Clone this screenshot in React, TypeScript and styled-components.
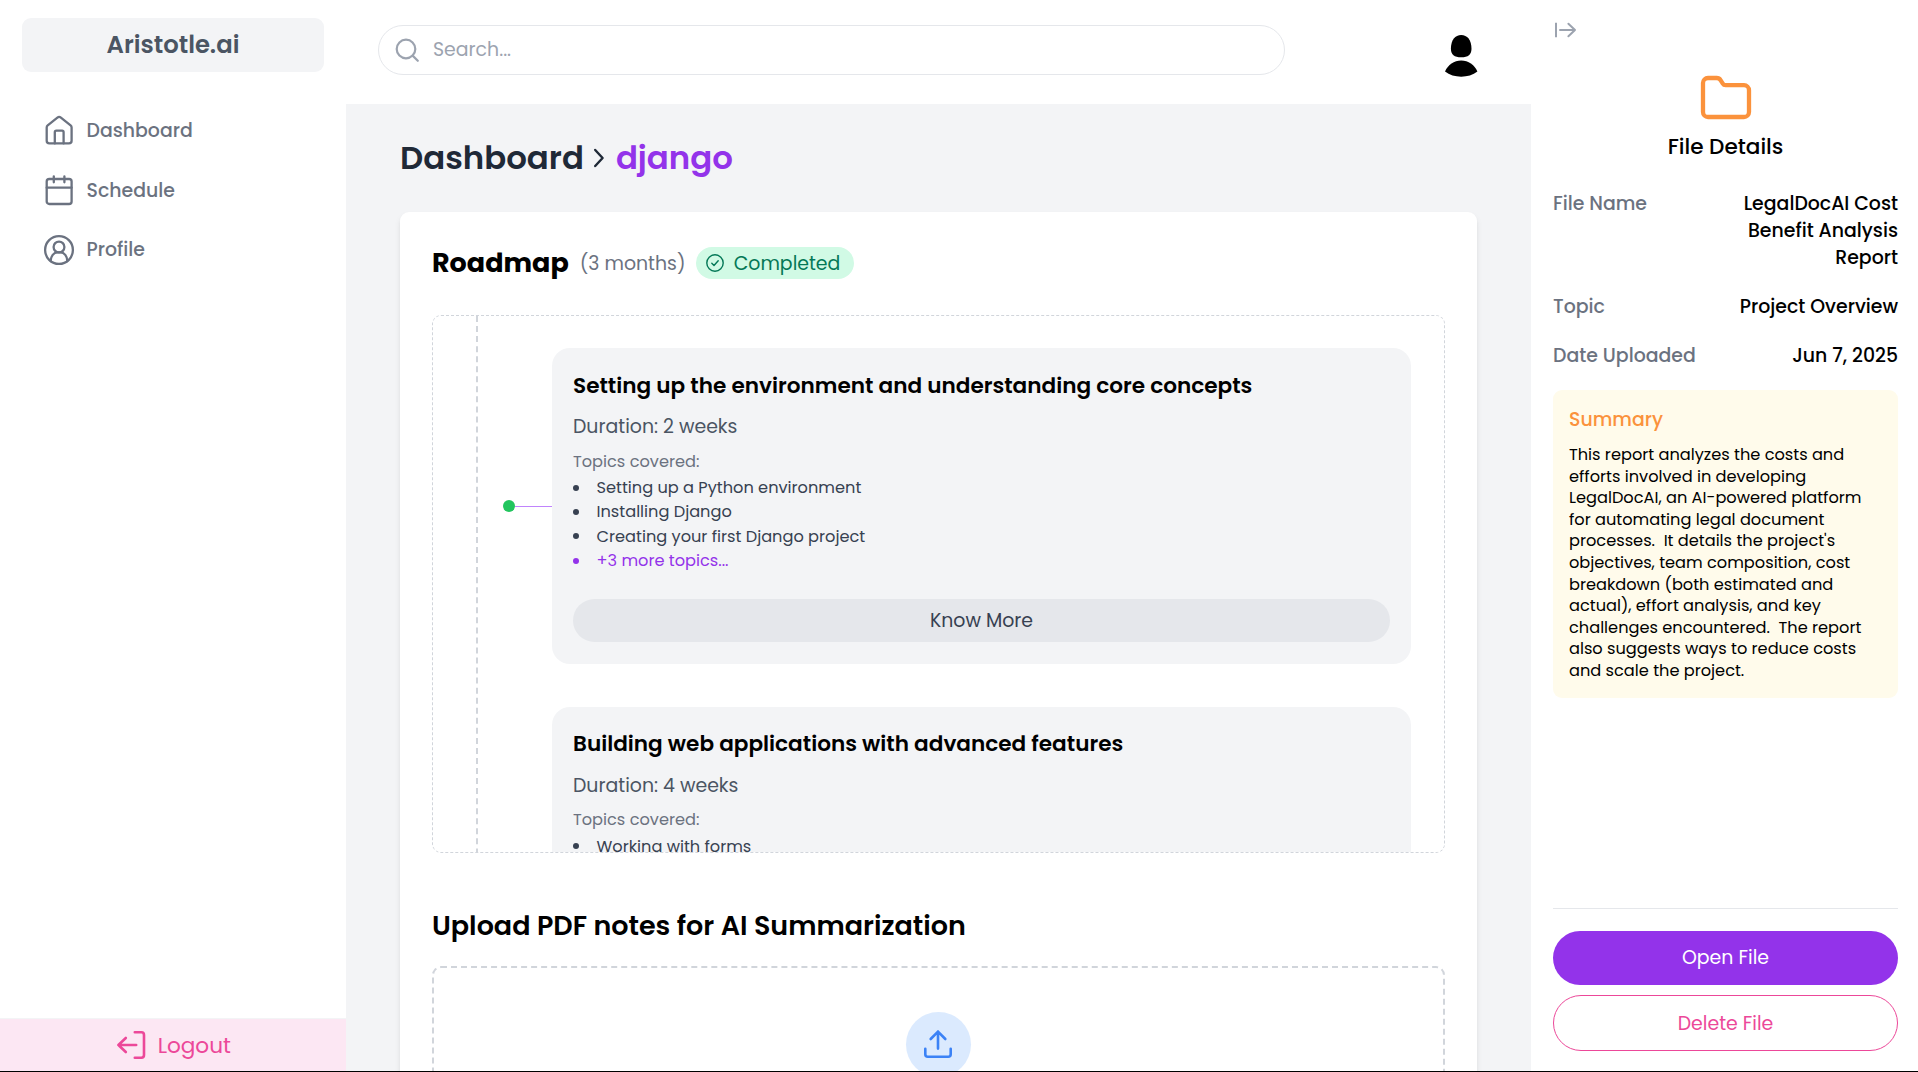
import React from 'react';
import styled, { createGlobalStyle } from 'styled-components';

const color = {
  gray100: '#f3f4f6',
  gray200: '#e5e7eb',
  gray300: '#d1d5db',
  gray400: '#9ca3af',
  gray500: '#6b7280',
  gray600: '#4b5563',
  gray700: '#374151',
  gray800: '#1f2937',
  purple: '#9333ea',
  pink: '#ec4899',
  orange: '#fb923c',
};

const GlobalStyle = createGlobalStyle`
  *, *::before, *::after { box-sizing: border-box; }
  body {
    margin: 0;
    overflow: hidden;
    background: #fff;
    color: #000;
    font-family: Poppins, Inter, 'Liberation Sans', sans-serif;
    font-feature-settings: 'cv11';
    font-size: 18.9px;
    line-height: 27px;
  }
  h1, h2, h3, p, ul, dl, dd, dt { margin: 0; padding: 0; }
  ul { list-style: none; }
  button, input { font: inherit; font-feature-settings: inherit; color: inherit; }
  svg { display: block; flex: none; overflow: visible; }
`;

const Page = styled.div`
  display: flex;
  height: 1072px;
  border-bottom: 1px solid #000;
  overflow: hidden;
`;

/* ---------- Sidebar ---------- */

const Sidebar = styled.aside`
  width: 346px;
  flex: none;
  display: flex;
  flex-direction: column;
  background: #fff;
`;

const Brand = styled.div`
  margin: 18px 22px 0;
  height: 54px;
  padding-bottom: 2px;
  border-radius: 9px;
  background: ${color.gray100};
  color: ${color.gray600};
  display: flex;
  align-items: center;
  justify-content: center;
  font-size: 24.3px;
  font-weight: 600;
`;

const Nav = styled.nav`
  flex: 1;
  padding: 28.5px 44px 0;
`;

const NavItem = styled.a`
  height: 59.7px;
  display: flex;
  align-items: center;
  gap: 12.5px;
  color: ${color.gray500};
  font-weight: 500;
`;

const Logout = styled.button`
  height: 53px;
  padding: 0 0 0 2px;
  border: 0;
  border-top: 1px solid ${color.gray100};
  background: #fce7f3;
  color: ${color.pink};
  display: flex;
  align-items: center;
  justify-content: center;
  gap: 11.5px;
  font-size: 21.6px;
`;

/* ---------- Main column ---------- */

const Main = styled.main`
  flex: 1;
  min-width: 0;
  display: flex;
  flex-direction: column;
  background: ${color.gray100};
`;

const Header = styled.header`
  flex: none;
  height: 104px;
  padding: 25px 53px 0 32px;
  background: #fff;
  display: flex;
  justify-content: space-between;
  align-items: flex-start;
`;

const SearchBox = styled.label`
  width: 907px;
  height: 50px;
  padding: 0 18px 1px 16px;
  border: 1px solid ${color.gray200};
  border-radius: 25px;
  display: flex;
  align-items: center;
  gap: 14px;
  color: ${color.gray400};
`;

const SearchInput = styled.input`
  flex: 1;
  height: 27px;
  padding: 0;
  border: 0;
  outline: 0;
  background: none;
  &::placeholder { color: ${color.gray400}; opacity: 1; }
`;

const AvatarSlot = styled.div`
  padding-top: 10px;
  width: 33px;
`;

const Content = styled.div`
  flex: 1;
  min-height: 0;
  padding: 0 54px;
  overflow: hidden;
`;

const Breadcrumb = styled.h1`
  height: 108px;
  display: flex;
  align-items: center;
  color: ${color.gray800};
  font-size: 32.4px;
  font-weight: 600;
  line-height: 40px;
`;

const Chevron = styled.span`
  padding: 0 12px 0 10px;
`;

const Current = styled.span`
  color: ${color.purple};
`;

const Card = styled.section`
  height: 1100px;
  padding: 32px;
  border-radius: 9px;
  background: #fff;
  box-shadow: 0 4px 7px -1px rgba(0, 0, 0, 0.1), 0 2px 4px -2px rgba(0, 0, 0, 0.1);
`;

const RoadmapHead = styled.div`
  height: 38px;
  display: flex;
  align-items: center;
  gap: 11px;
`;

const RoadmapTitle = styled.h2`
  padding-bottom: 1.5px;
  font-size: 27px;
  font-weight: 700;
`;

const Months = styled.span`
  width: 105.5px;
  white-space: nowrap;
  color: ${color.gray500};
`;

const Badge = styled.span`
  width: 158px;
  height: 32px;
  padding-left: 10px;
  border-radius: 16px;
  background: #d1fae5;
  color: #047857;
  display: flex;
  align-items: center;
  gap: 9.5px;
`;

const RoadmapScroll = styled.div`
  height: 538px;
  margin-top: 33px;
  padding-left: 43px;
  border: 1px dashed ${color.gray300};
  border-radius: 9px;
  overflow: hidden;
`;

const Timeline = styled.div`
  height: 900px;
  padding: 32px 33px 0 24.5px;
  border-left: 2px dashed ${color.gray300};
  display: flex;
  flex-direction: column;
  gap: 42.6px;
`;

const Step = styled.div`
  display: flex;
  align-items: center;
`;

const Dot = styled.span`
  flex: none;
  width: 12px;
  height: 12px;
  border-radius: 50%;
  background: #22c55e;
`;

const Connector = styled.span`
  flex: none;
  width: 37.5px;
  height: 1px;
  background: #c084fc;
`;

const StepCard = styled.article`
  flex: 1;
  height: 316px;
  padding: 23.6px 21px 0;
  border-radius: 18px;
  background: ${color.gray100};
`;

const StepTitle = styled.h3`
  font-size: 21.6px;
  font-weight: 600;
  line-height: 28px;
`;

const Duration = styled.p`
  margin-top: 13.4px;
  color: ${color.gray600};
`;

const TopicsLabel = styled.p`
  margin-top: 9.8px;
  color: ${color.gray500};
  font-size: 16.2px;
  line-height: 23px;
`;

const Topics = styled.ul`
  margin-top: 2.6px;
  color: ${color.gray700};
  font-size: 16.2px;
`;

const Topic = styled.li<{ $accent?: boolean }>`
  height: 24.4px;
  display: flex;
  align-items: center;
  gap: 17.5px;
  color: ${p => (p.$accent ? color.purple : 'inherit')};
  &::before {
    content: '';
    width: 6px;
    height: 6px;
    border-radius: 50%;
    background: currentColor;
  }
`;

const KnowMore = styled.button`
  width: 100%;
  height: 43px;
  margin-top: 25.8px;
  border: 0;
  border-radius: 22px;
  background: ${color.gray200};
  color: ${color.gray700};
`;

const UploadTitle = styled.h2`
  margin-top: 54px;
  font-size: 27px;
  font-weight: 600;
  line-height: 38px;
`;

const DropZone = styled.div`
  height: 300px;
  margin-top: 21px;
  padding-top: 44px;
  border: 2px dashed ${color.gray300};
  border-radius: 9px;
  display: flex;
  justify-content: center;
  align-items: flex-start;
`;

const UploadCircle = styled.div`
  width: 65px;
  height: 65px;
  padding: 0 1px 1px 0;
  border-radius: 50%;
  background: #dbeafe;
  color: #3b82f6;
  display: flex;
  align-items: center;
  justify-content: center;
`;

/* ---------- Details panel ---------- */

const Panel = styled.aside`
  width: 387px;
  flex: none;
  padding: 22px 20px 20px 22px;
  background: #fff;
  display: flex;
  flex-direction: column;
`;

const Collapse = styled.div`
  height: 54px;
  padding-left: 2px;
  color: ${color.gray400};
`;

const PanelHead = styled.div`
  display: flex;
  flex-direction: column;
  align-items: center;
  color: ${color.orange};
`;

const PanelTitle = styled.h2`
  margin: 14px 0 30px;
  color: #000;
  font-size: 21.6px;
  font-weight: 500;
`;

const Facts = styled.dl`
  display: flex;
  flex-direction: column;
  gap: 22px;
  font-weight: 500;
`;

const Fact = styled.div`
  display: flex;
  justify-content: space-between;
`;

const FactName = styled.dt`
  color: ${color.gray500};
`;

const FactValue = styled.dd`
  width: 180px;
  text-align: right;
`;

const Summary = styled.section`
  height: 308px;
  margin-top: 21px;
  padding: 16px;
  border-radius: 9px;
  background: #fffbeb;
`;

const SummaryTitle = styled.h3`
  color: ${color.orange};
  font-size: 18.9px;
  font-weight: 500;
`;

const SummaryText = styled.p`
  margin-top: 11px;
  font-size: 16.2px;
  line-height: 21.6px;
  white-space: pre;
`;

const Actions = styled.div`
  margin-top: auto;
  padding-top: 22px;
  border-top: 1px solid ${color.gray200};
  display: flex;
  flex-direction: column;
  gap: 10px;
`;

const OpenButton = styled.button`
  height: 54px;
  padding: 0 0 1px;
  border: 0;
  border-radius: 27px;
  background: ${color.purple};
  color: #fff;
`;

const DeleteButton = styled.button`
  height: 56px;
  border: 1px solid ${color.pink};
  border-radius: 28px;
  background: #fff;
  color: ${color.pink};
`;

/* ---------- Icons ---------- */

type IconProps = { w: number; h: number; stroke: number; children: React.ReactNode };

const Icon = ({ w, h, stroke, children }: IconProps) => (
  <svg width={w} height={h} viewBox={`0 0 ${w} ${h}`} fill="none" stroke="currentColor"
    strokeWidth={stroke} strokeLinecap="round" strokeLinejoin="round">
    {children}
  </svg>
);

const HomeIcon = () => (
  <Icon w={30} h={30} stroke={2.3}>
    <path d="M2.7 12.4c0-.8.4-1.6 1-2.1l9.7-7.7c1-.8 2.5-.8 3.5 0l9.7 7.7c.6.5 1 1.3 1 2.1v13.4a2.6 2.6 0 0 1-2.6 2.6H5.3a2.6 2.6 0 0 1-2.6-2.6Z" />
    <path d="M10.8 28.4V17.2c0-.9.6-1.5 1.5-1.5h5.8c.9 0 1.5.6 1.5 1.5v11.2" />
  </Icon>
);

const CalendarIcon = () => (
  <Icon w={30} h={30} stroke={2.3}>
    <rect x="2.7" y="4" width="24.9" height="25" rx="2.6" />
    <path d="M2.7 12.7h24.9M9.8 1.3v6M20.4 1.3v6" />
  </Icon>
);

const ProfileIcon = () => (
  <Icon w={30} h={30} stroke={2.3}>
    <circle cx="15" cy="15" r="13.9" />
    <circle cx="15" cy="12" r="5.4" />
    <path d="M6.7 26c0-4.8 3.2-8.6 6.6-8.6h3.4c3.4 0 6.6 3.8 6.6 8.6" />
  </Icon>
);

const LogoutIcon = () => (
  <Icon w={29} h={28} stroke={2.6}>
    <path d="M17.8 1.3h6.6c1.5 0 2.6 1.1 2.6 2.6v20.2c0 1.5-1.1 2.6-2.6 2.6h-6.6" />
    <path d="M1.4 14h17.8M8.8 7 1.4 14l7.4 7" />
  </Icon>
);

const SearchIcon = () => (
  <Icon w={24} h={24} stroke={2.2}>
    <circle cx="11" cy="11" r="9.3" />
    <path d="m17.6 17.6 5.2 5.2" />
  </Icon>
);

const Avatar = () => (
  <svg width="33" height="42" viewBox="0 0 33 42" fill="#000">
    <path d="M16.2 0c6 0 10.3 5 10.3 13.8 0 6-3.4 8.5-10.3 8.5S5.9 19.8 5.9 13.8C5.9 5 10.2 0 16.2 0Z" />
    <path d="M0 36.6C3 29.8 9 25.6 16.2 25.6s13.2 4.2 16.2 11C28 40 22.2 41.8 16.2 41.8S4.4 40 0 36.6Z" />
  </svg>
);

const ChevronIcon = () => (
  <Icon w={10} h={20} stroke={2.4}>
    <path d="m1.2 2 7.4 8-7.4 8" />
  </Icon>
);

const CheckIcon = () => (
  <Icon w={18} h={18} stroke={1.4}>
    <circle cx="9" cy="9" r="8.2" />
    <path d="m5.8 9.3 2.2 2.2 4.2-4.8" />
  </Icon>
);

const UploadIcon = () => (
  <Icon w={28} h={28} stroke={2.6}>
    <path d="M14 18.6V1.6M6.7 9 14 1.6 21.3 9" />
    <path d="M1.3 18.8v5.4c0 1.5 1 2.5 2.5 2.5h20.4c1.5 0 2.5-1 2.5-2.5v-5.4" />
  </Icon>
);

const CollapseIcon = () => (
  <Icon w={21} h={16} stroke={2}>
    <path d="M1 .8v14.4" strokeLinecap="butt" />
    <path d="M5 8h15M13.4 1.7 20 8l-6.6 6.3" />
  </Icon>
);

const FolderIcon = () => (
  <Icon w={50} h={43} stroke={4.3}>
    <path d="M2 7a5 5 0 0 1 5-5h8.6c1.7 0 3.2.9 4.1 2.3l2.1 3.3c.6 1 1.6 1.6 2.8 1.6H43a5 5 0 0 1 5 5V36a5 5 0 0 1-5 5H7a5 5 0 0 1-5-5Z" />
  </Icon>
);

/* ---------- Data ---------- */

const navItems = [
  { label: 'Dashboard', icon: <HomeIcon /> },
  { label: 'Schedule', icon: <CalendarIcon /> },
  { label: 'Profile', icon: <ProfileIcon /> },
];

type RoadmapStep = { title: string; duration: string; topics: string[]; more?: number };

const steps: RoadmapStep[] = [
  {
    title: 'Setting up the environment and understanding core concepts',
    duration: '2 weeks',
    topics: [
      'Setting up a Python environment',
      'Installing Django',
      'Creating your first Django project',
    ],
    more: 3,
  },
  {
    title: 'Building web applications with advanced features',
    duration: '4 weeks',
    topics: ['Working with forms'],
  },
];

const facts = [
  { name: 'File Name', value: 'LegalDocAI Cost Benefit Analysis Report' },
  { name: 'Topic', value: 'Project Overview' },
  { name: 'Date Uploaded', value: 'Jun 7, 2025' },
];

const summary = [
  'This report analyzes the costs and',
  'efforts involved in developing',
  'LegalDocAI, an AI-powered platform',
  'for automating legal document',
  "processes.  It details the project's",
  'objectives, team composition, cost',
  'breakdown (both estimated and',
  'actual), effort analysis, and key',
  'challenges encountered.  The report',
  'also suggests ways to reduce costs',
  'and scale the project.',
].join('\n');

export default function App() {
  return (
    <>
      <GlobalStyle />
      <Page>
        <Sidebar>
          <Brand>Aristotle.ai</Brand>
          <Nav>
            {navItems.map(item => (
              <NavItem key={item.label}>
                {item.icon}
                {item.label}
              </NavItem>
            ))}
          </Nav>
          <Logout>
            <LogoutIcon />
            Logout
          </Logout>
        </Sidebar>

        <Main>
          <Header>
            <SearchBox>
              <SearchIcon />
              <SearchInput placeholder="Search..." />
            </SearchBox>
            <AvatarSlot><Avatar /></AvatarSlot>
          </Header>
          <Content>
            <Breadcrumb>
              <span>Dashboard</span>
              <Chevron><ChevronIcon /></Chevron>
              <Current>django</Current>
            </Breadcrumb>
            <Card>
              <RoadmapHead>
                <RoadmapTitle>Roadmap</RoadmapTitle>
                <Months>(3 months)</Months>
                <Badge><CheckIcon />Completed</Badge>
              </RoadmapHead>
              <RoadmapScroll>
                <Timeline>
                  {steps.map(step => (
                    <Step key={step.title}>
                      <Dot />
                      <Connector />
                      <StepCard>
                        <StepTitle>{step.title}</StepTitle>
                        <Duration>{`Duration: ${step.duration}`}</Duration>
                        <TopicsLabel>Topics covered:</TopicsLabel>
                        <Topics>
                          {step.topics.map(topic => <Topic key={topic}>{topic}</Topic>)}
                          {step.more && <Topic $accent>{`+${step.more} more topics...`}</Topic>}
                        </Topics>
                        {step.more && <KnowMore>Know More</KnowMore>}
                      </StepCard>
                    </Step>
                  ))}
                </Timeline>
              </RoadmapScroll>
              <UploadTitle>Upload PDF notes for AI Summarization</UploadTitle>
              <DropZone>
                <UploadCircle><UploadIcon /></UploadCircle>
              </DropZone>
            </Card>
          </Content>
        </Main>

        <Panel>
          <Collapse><CollapseIcon /></Collapse>
          <PanelHead>
            <FolderIcon />
            <PanelTitle>File Details</PanelTitle>
          </PanelHead>
          <Facts>
            {facts.map(fact => (
              <Fact key={fact.name}>
                <FactName>{fact.name}</FactName>
                <FactValue>{fact.value}</FactValue>
              </Fact>
            ))}
          </Facts>
          <Summary>
            <SummaryTitle>Summary</SummaryTitle>
            <SummaryText>{summary}</SummaryText>
          </Summary>
          <Actions>
            <OpenButton>Open File</OpenButton>
            <DeleteButton>Delete File</DeleteButton>
          </Actions>
        </Panel>
      </Page>
    </>
  );
}
